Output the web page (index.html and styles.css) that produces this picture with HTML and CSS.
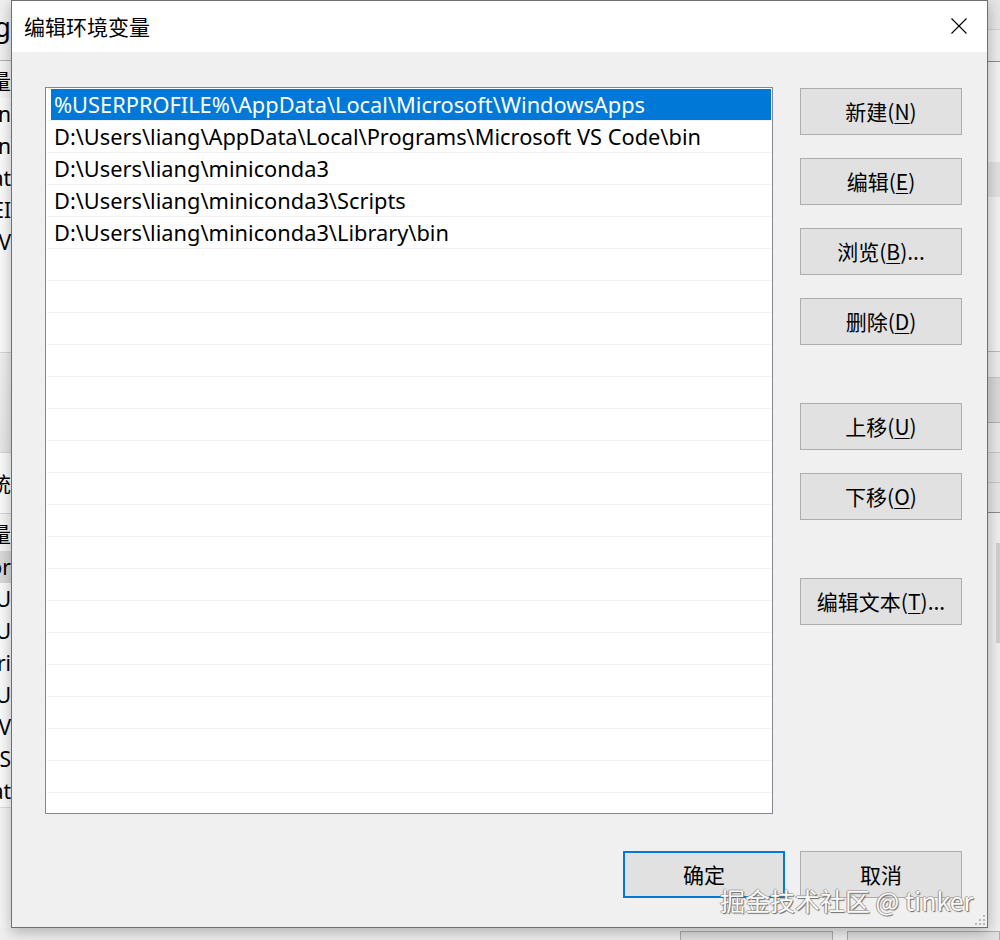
FILE: index.html
```html
<!DOCTYPE html>
<html lang="zh-CN">
<head>
<meta charset="utf-8">
<title>编辑环境变量</title>
<link rel="stylesheet" href="styles.css">
</head>
<body>
<div class="screen">
  <div class="backdrop">
    <div class="back-main">
      <div class="strip-left">
        <div class="bl-title">g</div>
        <div class="bl-head">变量</div>
        <div class="bl-row">n</div>
        <div class="bl-row">n</div>
        <div class="bl-row">at</div>
        <div class="bl-row">EI</div>
        <div class="bl-row">V</div>
        <div class="bl-gap1"></div>
        <div class="bl-band"></div>
        <div class="bl-label">统</div>
        <div class="bl-head2">变量</div>
        <div class="bl-row bl-sel">or</div>
        <div class="bl-row">U</div>
        <div class="bl-row">U</div>
        <div class="bl-row">ri</div>
        <div class="bl-row">U</div>
        <div class="bl-row">V</div>
        <div class="bl-row">S</div>
        <div class="bl-row">at</div>
        <div class="bl-rest"></div>
      </div>
      <div class="back-spacer"></div>
      <div class="strip-right">
        <div class="br-top"></div>
        <div class="br-title"></div>
        <div class="br-body"><div class="br-box"></div></div>
        <div class="br-a"></div>
        <div class="br-band"></div>
        <div class="br-b"></div>
        <div class="br-c"></div>
        <div class="br-d"></div>
        <div class="br-rest"><div class="br-scroll"></div></div>
      </div>
    </div>
    <div class="back-bottom">
      <div class="bb-btn bb-one"></div>
      <div class="bb-btn bb-two"></div>
    </div>
  </div>

  <div class="dialog">
    <div class="titlebar">
      <span class="title">编辑环境变量</span>
      <svg class="close" width="16" height="16" viewBox="0 0 16 16"><path d="M0.5 0.5 L15.5 15.5 M15.5 0.5 L0.5 15.5" stroke="#000" stroke-width="1.1" fill="none"/></svg>
    </div>
    <div class="content">
      <div class="main">
        <div class="listbox">
          <div class="row"><div class="cell selected">%USERPROFILE%\AppData\Local\Microsoft\WindowsApps</div></div>
          <div class="row"><div class="cell">D:\Users\liang\AppData\Local\Programs\Microsoft VS Code\bin</div></div>
          <div class="row"><div class="cell">D:\Users\liang\miniconda3</div></div>
          <div class="row"><div class="cell">D:\Users\liang\miniconda3\Scripts</div></div>
          <div class="row"><div class="cell">D:\Users\liang\miniconda3\Library\bin</div></div>
          <div class="row"><div class="cell"></div></div>
          <div class="row"><div class="cell"></div></div>
          <div class="row"><div class="cell"></div></div>
          <div class="row"><div class="cell"></div></div>
          <div class="row"><div class="cell"></div></div>
          <div class="row"><div class="cell"></div></div>
          <div class="row"><div class="cell"></div></div>
          <div class="row"><div class="cell"></div></div>
          <div class="row"><div class="cell"></div></div>
          <div class="row"><div class="cell"></div></div>
          <div class="row"><div class="cell"></div></div>
          <div class="row"><div class="cell"></div></div>
          <div class="row"><div class="cell"></div></div>
          <div class="row"><div class="cell"></div></div>
          <div class="row"><div class="cell"></div></div>
          <div class="row"><div class="cell"></div></div>
          <div class="row"><div class="cell"></div></div>
          <div class="row"><div class="cell"></div></div>
        </div>
        <div class="actions">
          <div class="group">
            <button class="btn">新建(<u>N</u>)</button>
            <button class="btn">编辑(<u>E</u>)</button>
            <button class="btn">浏览(<u>B</u>)...</button>
            <button class="btn">删除(<u>D</u>)</button>
          </div>
          <div class="group">
            <button class="btn">上移(<u>U</u>)</button>
            <button class="btn">下移(<u>O</u>)</button>
          </div>
          <div class="group">
            <button class="btn">编辑文本(<u>T</u>)...</button>
          </div>
        </div>
      </div>
      <div class="footer">
        <button class="btn btn-default">确定</button>
        <button class="btn">取消</button>
      </div>
    </div>
    <div class="grip">
      <i></i><i></i><i></i><i></i><i></i><i></i>
    </div>
  </div>

  <div class="watermark">掘金技术社区 @ tinker</div>
</div>
</body>
</html>
```

FILE: styles.css
```css
* { box-sizing: border-box; }
html, body { margin: 0; padding: 0; }
body {
  font-family: "Noto Sans", "Noto Sans CJK SC", sans-serif;
  background: #f0f0f0;
}
.screen {
  position: relative;
  width: 1000px;
  height: 940px;
  overflow: hidden;
  background: #f3f3f3;
}

/* ---------- window behind the dialog ---------- */
.backdrop {
  display: flex;
  flex-direction: column;
  width: 1000px;
  height: 940px;
}
.back-main {
  display: flex;
  height: 928px;
}
.back-spacer { flex: 1; }
.strip-left {
  width: 11px;
  display: flex;
  flex-direction: column;
  font-size: 21px;
  color: #000;
  background: #fbfbfb;
  overflow: hidden;
  white-space: nowrap;
}
.strip-left > div {
  display: flex;
  justify-content: flex-end;
  align-items: center;
  flex: none;
}
.bl-title {
  height: 61px;
  background: #f0f0f0;
  font-size: 28px;
  border-bottom: 1px solid #b4b4b4;
  padding-bottom: 8px;
}
.bl-head { height: 37px; background: #f5f5f5; }
.bl-row { height: 32px; }
.bl-sel { background: #d9d9d9; }
.bl-gap1 { height: 95px; border-bottom: 1px solid #d6d6d6; }
.bl-band {
  height: 100px;
  background: linear-gradient(#f0f0f0, #e7e7e7);
  border-bottom: 1px solid #d6d6d6;
}
.bl-label { height: 61px; border-bottom: 1px solid #d6d6d6; }
.bl-head2 { height: 37px; background: #f5f5f5; }
.bl-rest { flex: 1 !important; background: #f5f5f5; border-top: 1px solid #dcdcdc; }

.strip-right {
  width: 12px;
  display: flex;
  flex-direction: column;
  background: #f0f0f0;
}
.strip-right > div { flex: none; }
.br-top { height: 30px; background: #e6e6e6; border-bottom: 1px solid #cfcfcf; }
.br-title { height: 32px; background: #ececec; border-bottom: 1px solid #8a8a8a; }
.br-body {
  height: 290px;
  background: #f2f2f2;
  border-bottom: 1px solid #b8b8b8;
  padding: 100px 0 0 0;
}
.br-box { height: 35px; background: #e2e2e2; }
.br-a { height: 25px; background: #ececec; }
.br-band { height: 46px; background: #d8d8d8; border-top: 1px solid #c8c8c8; border-bottom: 1px solid #b0b0b0; }
.br-b { height: 30px; background: #e8e8e8; border-bottom: 1px solid #c8c8c8; }
.br-c { height: 30px; background: #e4e4e4; border-bottom: 1px solid #c8c8c8; }
.br-d { height: 30px; background: #e6e6e6; border-bottom: 1px solid #8a8a8a; }
.br-rest { flex: 1 !important; background: #efefef; padding: 30px 0 0 8px; }
.br-scroll { width: 4px; height: 100px; background: #d0d0d0; }

.back-bottom {
  height: 12px;
  background: #f0f0f0;
  display: flex;
  padding-top: 3px;
}
.bb-btn {
  height: 20px;
  background: #e1e1e1;
  border: 1px solid #adadad;
}
.bb-one { width: 161px; margin-left: 680px; }
.bb-two { width: 160px; margin-left: 14px; }

/* ---------- dialog ---------- */
.dialog {
  position: absolute;
  left: 11px;
  top: 0;
  width: 977px;
  height: 928px;
  background: #f0f0f0;
  border: 1px solid #707070;
  box-shadow: 0 4px 14px rgba(0,0,0,0.28);
  display: flex;
  flex-direction: column;
}
.titlebar {
  height: 51px;
  background: #fff;
  display: flex;
  align-items: center;
  justify-content: space-between;
  padding: 0 20px 0 12px;
  flex: none;
}
.title {
  font-family: "Noto Sans CJK SC", sans-serif;
  font-size: 21px;
  color: #000;
  margin-top: -2px;
}
.close { display: block; margin-top: -1px; }

.content {
  flex: 1;
  display: flex;
  flex-direction: column;
  padding: 35px 25px 0 33px;
}
.main {
  display: flex;
  gap: 27px;
}
.listbox {
  width: 728px;
  height: 727px;
  background: #fff;
  border: 1px solid #828790;
  padding: 1px 1px 0 1px;
  overflow: hidden;
  flex: none;
}
.row {
  height: 32px;
  border-bottom: 1px solid #f0f0f0;
}
.cell {
  height: 31px;
  margin-left: 4px;
  padding-left: 3px;
  font-size: 21.8px;
  line-height: 31px;
  color: #000;
  white-space: nowrap;
  overflow: hidden;
}
.cell.selected {
  background: #0078d7;
  color: #fff;
}

.actions {
  display: flex;
  flex-direction: column;
  gap: 58px;
  padding-top: 1px;
}
.group {
  display: flex;
  flex-direction: column;
  gap: 23px;
}
.btn {
  width: 162px;
  height: 47px;
  background: #e1e1e1;
  border: 1px solid #adadad;
  border-radius: 0;
  font-family: "Noto Sans CJK SC", sans-serif;
  font-size: 21px;
  color: #000;
  padding: 0 0 2px 0;
  margin: 0;
  display: flex;
  align-items: center;
  justify-content: center;
}
.btn u { text-underline-offset: 3px; text-decoration-thickness: 1px; }
.btn-default { border: 2px solid #0078d7; }

.footer {
  display: flex;
  justify-content: flex-end;
  gap: 15px;
  margin-top: 37px;
}

.grip {
  position: absolute;
  right: 2px;
  bottom: 2px;
  width: 10px;
  height: 10px;
  display: grid;
  grid-template-columns: repeat(3, 2px);
  grid-template-rows: repeat(3, 2px);
  gap: 2px;
}
.grip i { background: #b8b8b8; display: block; }
.grip i:nth-child(1) { grid-column: 3; grid-row: 1; }
.grip i:nth-child(2) { grid-column: 2; grid-row: 2; }
.grip i:nth-child(3) { grid-column: 3; grid-row: 2; }
.grip i:nth-child(4) { grid-column: 1; grid-row: 3; }
.grip i:nth-child(5) { grid-column: 2; grid-row: 3; }
.grip i:nth-child(6) { grid-column: 3; grid-row: 3; }

.watermark {
  position: absolute;
  left: 720px;
  top: 880px;
  font-family: "Noto Sans CJK SC", sans-serif;
  font-size: 25px;
  line-height: 40px;
  color: #fafafa;
  white-space: nowrap;
  text-shadow: 1px 1px 1px #6a6a6a, -1px 0 0 #9a9a9a, 0 -1px 0 #b0b0b0;
}
```
